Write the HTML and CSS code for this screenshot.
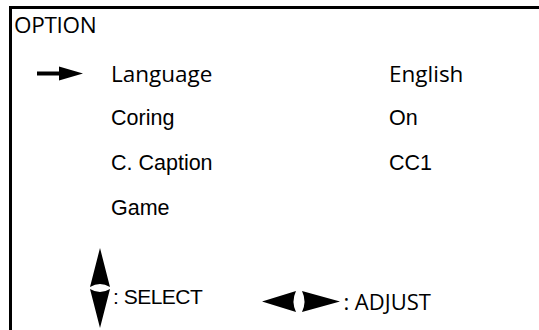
FILE: index.html
```html
<!DOCTYPE html>
<html>
<head>
<meta charset="utf-8">
<link rel="stylesheet" href="styles.css">
</head>
<body>
<div class="panel">
  <div class="title">OPTION</div>
  <div class="menu">
    <div class="row">
      <span class="cursor">
        <svg width="46" height="15" viewBox="0 0 46 15"><path d="M0 5.5 H22 V0.5 L46 7.5 L22 14.5 V9.5 H0 Z" fill="#000"/></svg>
      </span>
      <span class="label fr">Language</span>
      <span class="value fr">English</span>
    </div>
    <div class="row">
      <span class="cursor"></span>
      <span class="label">Coring</span>
      <span class="value">On</span>
    </div>
    <div class="row">
      <span class="cursor"></span>
      <span class="label">C. Caption</span>
      <span class="value">CC1</span>
    </div>
    <div class="row">
      <span class="cursor"></span>
      <span class="label">Game</span>
      <span class="value"></span>
    </div>
  </div>
  <div class="help">
    <div class="hint hint-select">
      <svg class="ud" width="20" height="80" viewBox="0 0 20 80">
        <path d="M10 0 L20 39 Q10 33 0 39 Z" fill="#000"/>
        <path d="M0 41 Q10 47 20 41 L10 80 Z" fill="#000"/>
      </svg>
      <span class="hint-text sel">: SELECT</span>
    </div>
    <div class="hint hint-adjust">
      <svg class="lr" width="78" height="21" viewBox="0 0 78 21">
        <path d="M0 10.5 L34 0 Q29 10.5 34 21 Z" fill="#000"/>
        <path d="M40 0 L78 10.5 L40 21 Q45 10.5 40 0 Z" fill="#000"/>
      </svg>
      <span class="hint-text fr adj">: ADJUST</span>
    </div>
  </div>
</div>
</body>
</html>
```
FILE: styles.css
```css
html, body {
  margin: 0;
  padding: 0;
  background: #fff;
}
body {
  width: 539px;
  height: 330px;
  overflow: hidden;
  font-family: "Liberation Sans", Arial, sans-serif;
  color: #000;
}
.panel {
  margin: 6px 0 0 9px;
  height: 324px;
  border-top: 3px solid #000;
  border-left: 3px solid #000;
  box-sizing: border-box;
  display: flex;
  flex-direction: column;
}
.fr {
  font-family: "Open Sans", sans-serif;
  font-size: 22.5px;
}
.title {
  font-family: "Open Sans", sans-serif;
  font-size: 22.5px;
  line-height: 28px;
  padding: 2px 0 0 2px;
  letter-spacing: -0.3px;
}
.menu {
  display: flex;
  flex-direction: column;
  padding-left: 25px;
  margin-top: 12px;
}
.row {
  display: grid;
  grid-template-columns: 74px 278px auto;
  height: 45px;
  align-items: center;
  font-size: 21.5px;
}
.cursor {
  display: flex;
  align-items: center;
}
.help {
  display: flex;
  align-items: flex-start;
  padding-left: 78px;
  margin-top: 17px;
  gap: 60px;
}
.hint {
  display: flex;
  align-items: center;
}
.hint-adjust {
  margin-top: 38px;
}
.hint-text {
  font-size: 21px;
  margin-left: 3px;
}
.sel {
  letter-spacing: -0.5px;
  padding-top: 17px;
}
.adj {
  font-size: 22px;
  margin-left: 3px;
}
```
